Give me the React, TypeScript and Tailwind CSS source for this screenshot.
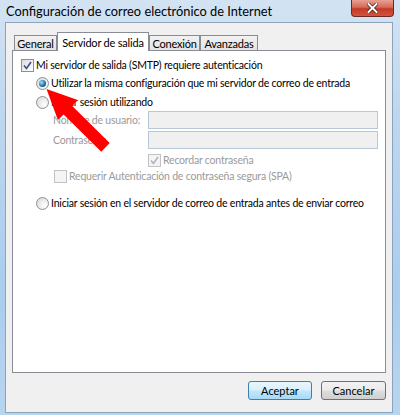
import React from 'react';

const font = { fontFamily: 'Lato, "Liberation Sans", sans-serif' };

const Check = ({ checked = false, disabled = false }: { checked?: boolean; disabled?: boolean }) => (
  <div
    className={`w-[13px] h-[13px] border flex items-center justify-center shrink-0 ${
      disabled ? 'border-[#c2c2c2] bg-[#f4f4f4]' : 'border-[#8e8f8f] bg-[linear-gradient(135deg,#dcdcdc,#ffffff)]'
    }`}
  >
    {checked && (
      <svg width="9" height="9" viewBox="0 0 9 9">
        <path d="M1 4.5 L3.5 7.5 L8 1" fill="none" stroke={disabled ? '#b4b4b4' : '#3d4f89'} strokeWidth="1.6" />
      </svg>
    )}
  </div>
);

const Radio = ({ checked = false }: { checked?: boolean }) => (
  <div className="w-[13px] h-[13px] rounded-full border border-[#8e8f8f] bg-[radial-gradient(circle_at_70%_70%,#ffffff,#d6d6d6)] flex items-center justify-center shrink-0">
    {checked && (
      <div className="w-[7px] h-[7px] rounded-full bg-[radial-gradient(circle_at_35%_35%,#9de0ff,#1b6c9e_60%,#0d3e63)]" />
    )}
  </div>
);

const Tab = ({ label, w, active = false }: { label: string; w: string; active?: boolean }) => (
  <div
    className={`${w} flex items-center justify-center border border-b-0 whitespace-nowrap ${
      active
        ? 'h-[19px] bg-white border-[#898c95] -mb-[1px] relative z-10'
        : 'h-[15px] bg-[linear-gradient(#f2f2f2,#e3e3e3)] border-[#898c95]'
    }`}
  >
    <span className="text-[11px] tracking-[-0.2px] text-black leading-none">{label}</span>
  </div>
);

export default function App() {
  return (
    <div
      className="w-[400px] h-[415px] relative overflow-hidden bg-[linear-gradient(180deg,#d3e3f3_0%,#bcd6ef_30%,#aacdee_70%,#b8d5ee_100%)]"
      style={font}
    >
      <div className="h-[22px] flex items-start justify-between">
        <div className="pl-[6px] pt-[5px] text-[12.8px] text-black leading-none whitespace-nowrap">
          Configuración de correo electrónico de Internet
        </div>
        <div className="mr-[6px] w-[43px] h-[17px] rounded-b-[4px] border border-t-0 border-[#6b2a22] bg-[linear-gradient(180deg,#e8a092_0%,#d66a5a_45%,#c23a26_55%,#d5533c_100%)] flex items-center justify-center">
          <svg width="11" height="10" viewBox="0 0 11 10">
            <path d="M1.5 1 L9.5 9 M9.5 1 L1.5 9" stroke="#3a1a16" strokeWidth="3.4" strokeLinecap="square" />
            <path d="M1.5 1 L9.5 9 M9.5 1 L1.5 9" stroke="#ffffff" strokeWidth="2" strokeLinecap="square" />
          </svg>
        </div>
      </div>

      <div className="ml-[5px] w-[388px] h-[391px] bg-[#f0f0f0] border border-[#8da3bb] pt-[9px] pl-[6px]">
        <div className="flex items-end h-[18px] pl-[2px]">
          <Tab label="General" w="w-[43px]" />
          <Tab label="Servidor de salida" w="w-[92px]" active />
          <Tab label="Conexión" w="w-[51px]" />
          <Tab label="Avanzadas" w="w-[58px]" />
        </div>

        <div className="w-[374px] h-[323px] bg-white border border-[#898c95] text-[10.5px] tracking-[-0.2px] leading-none text-black flex flex-col whitespace-nowrap">
          <div className="mt-[6px] ml-[8px] h-[16px] flex items-center gap-[2px]">
            <Check checked />
            <span>Mi servidor de salida (SMTP) requiere autenticación</span>
          </div>
          <div className="mt-[2px] ml-[23px] h-[16px] flex items-center gap-[2px]">
            <Radio checked />
            <span>Utilizar la misma configuración que mi servidor de correo de entrada</span>
          </div>
          <div className="mt-[3px] ml-[23px] h-[16px] flex items-center gap-[2px]">
            <Radio />
            <span>Iniciar sesión utilizando</span>
          </div>
          <div className="mt-[1px] ml-[40px] h-[18px] flex items-center text-[#9a9a9a]">
            <span className="w-[95px]">Nombre de usuario:</span>
            <div className="w-[230px] h-[18px] border border-[#b9c8d8] bg-[#f0f0f0]" />
          </div>
          <div className="mt-[2px] ml-[40px] h-[18px] flex items-center text-[#9a9a9a]">
            <span className="w-[95px]">Contraseña:</span>
            <div className="w-[230px] h-[18px] border border-[#b9c8d8] bg-[#f0f0f0]" />
          </div>
          <div className="mt-[3px] ml-[135px] h-[16px] flex items-center gap-[2px] text-[#9a9a9a]">
            <Check checked disabled />
            <span>Recordar contraseña</span>
          </div>
          <div className="ml-[41px] h-[16px] flex items-center gap-[2px] text-[#9a9a9a]">
            <Check disabled />
            <span>Requerir Autenticación de contraseña segura (SPA)</span>
          </div>
          <div className="mt-[11px] ml-[23px] h-[16px] flex items-center gap-[2px]">
            <Radio />
            <span>Iniciar sesión en el servidor de correo de entrada antes de enviar correo</span>
          </div>
        </div>

        <div className="mt-[8px] w-[374px] flex justify-end gap-[9px]">
          <button className="w-[64px] h-[19px] rounded-[3px] border border-[#3c7fb1] bg-[linear-gradient(180deg,#eaf6fd_0%,#d9f0fc_45%,#bee6fd_55%,#a7d9f5_100%)] text-[11px] leading-none text-black">
            Aceptar
          </button>
          <button className="w-[65px] h-[19px] rounded-[3px] border border-[#707070] bg-[linear-gradient(180deg,#f2f2f2_0%,#ebebeb_45%,#dddddd_55%,#cfcfcf_100%)] text-[11px] leading-none text-black">
            Cancelar
          </button>
        </div>
      </div>

      <svg className="absolute top-0 left-0 pointer-events-none" width="400" height="415" viewBox="0 0 400 415">
        <polygon
          points="46.5,89 77.7,100.1 72,105.8 109.7,143.1 101.3,151.7 63.6,114.4 57.9,120.1"
          fill="#ff0000"
        />
      </svg>
    </div>
  );
}
